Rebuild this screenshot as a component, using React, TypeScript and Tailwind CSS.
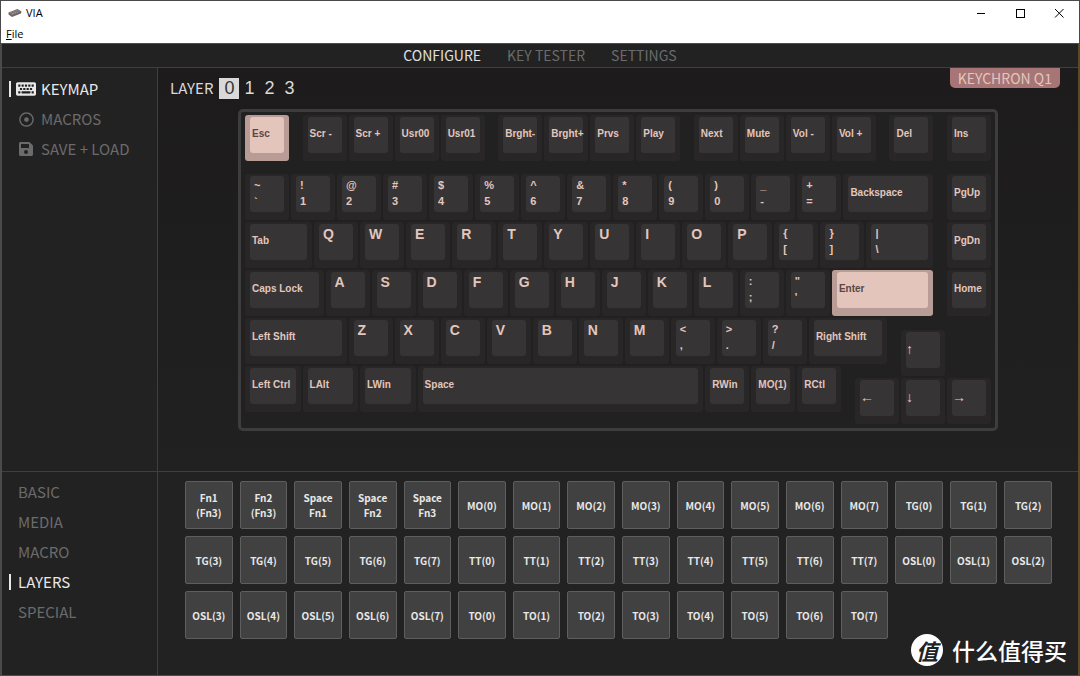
import { FaKeyboard, FaRegDotCircle, FaSave } from "react-icons/fa";
import clsx from "clsx";

type KeyDef = {
  label: string;
  // second legend, drawn under the first
  sub?: string;
  // position and width in quarter units
  x: number;
  w: number;
  accent?: boolean;
};

type KeyRow = { y: number; keys: KeyDef[] };

// Lays one-unit keys next to each other, starting at quarter unit x
const run = (x: number, labels: string[]): KeyDef[] =>
  labels.map((text, i) => {
    const [label, sub] = text.split(" ");
    return { label, sub, x: x + i * 4, w: 4 };
  });

const rows: KeyRow[] = [
  {
    y: 1,
    keys: [
      { label: "Esc", x: 0, w: 4, accent: true },
      { label: "Scr -", x: 5, w: 4 },
      { label: "Scr +", x: 9, w: 4 },
      ...run(13, ["Usr00", "Usr01"]),
      ...run(22, ["Brght-", "Brght+", "Prvs", "Play"]),
      ...run(39, ["Next", "Mute"]),
      { label: "Vol -", x: 47, w: 4 },
      { label: "Vol +", x: 51, w: 4 },
      { label: "Del", x: 56, w: 4 },
      { label: "Ins", x: 61, w: 4 },
    ],
  },
  {
    y: 6,
    keys: [
      ...run(0, ["~ `", "! 1", "@ 2", "# 3", "$ 4", "% 5", "^ 6", "& 7", "* 8", "( 9", ") 0", "_ -", "+ ="]),
      { label: "Backspace", x: 52, w: 8 },
      { label: "PgUp", x: 61, w: 4 },
    ],
  },
  {
    y: 10,
    keys: [
      { label: "Tab", x: 0, w: 6 },
      ...run(6, ["Q", "W", "E", "R", "T", "Y", "U", "I", "O", "P", "{ [", "} ]"]),
      { label: "|", sub: "\\", x: 54, w: 6 },
      { label: "PgDn", x: 61, w: 4 },
    ],
  },
  {
    y: 14,
    keys: [
      { label: "Caps Lock", x: 0, w: 7 },
      ...run(7, ["A", "S", "D", "F", "G", "H", "J", "K", "L", ": ;", "\" '"]),
      { label: "Enter", x: 51, w: 9, accent: true },
      { label: "Home", x: 61, w: 4 },
    ],
  },
  {
    y: 18,
    keys: [
      { label: "Left Shift", x: 0, w: 9 },
      ...run(9, ["Z", "X", "C", "V", "B", "N", "M", "< ,", "> .", "? /"]),
      { label: "Right Shift", x: 49, w: 7 },
    ],
  },
  { y: 19, keys: [{ label: "↑", x: 57, w: 4 }] },
  {
    y: 22,
    keys: [
      { label: "Left Ctrl", x: 0, w: 5 },
      { label: "LAlt", x: 5, w: 5 },
      { label: "LWin", x: 10, w: 5 },
      { label: "Space", x: 15, w: 25 },
      ...run(40, ["RWin", "MO(1)", "RCtl"]),
    ],
  },
  { y: 23, keys: run(53, ["←", "↓", "→"]) },
];

const range = (name: string, from: number, to: number) =>
  Array.from({ length: to - from + 1 }, (_, i) => `${name}(${from + i})`);

const keycodes = [
  "Fn1 (Fn3)",
  "Fn2 (Fn3)",
  "Space Fn1",
  "Space Fn2",
  "Space Fn3",
  ...range("MO", 0, 7),
  ...range("TG", 0, 7),
  ...range("TT", 0, 7),
  ...range("OSL", 0, 7),
  ...range("TO", 0, 7),
];

const views = [
  { label: "KEYMAP", icon: FaKeyboard, size: "size-5" },
  { label: "MACROS", icon: FaRegDotCircle, size: "size-[15px]" },
  { label: "SAVE + LOAD", icon: FaSave, size: "size-4" },
];

const categories = ["BASIC", "MEDIA", "MACRO", "LAYERS", "SPECIAL"];

function Keycap({ def, y }: { def: KeyDef; y: number }) {
  const letter = /^[A-Z]$/.test(def.label);
  const arrow = /^[←↑→↓]$/.test(def.label);

  return (
    <div
      className="pr-[2px] pb-[2px]"
      style={{ gridColumn: `${def.x + 1} / span ${def.w}`, gridRow: `${y} / span 4` }}
    >
      <button
        className={clsx(
          "block h-full w-full rounded-[3px] px-[5px] pt-[2px] pb-[8px] text-left font-['Liberation_Sans',Arial,sans-serif] font-bold whitespace-nowrap",
          def.accent ? "bg-[#b99c95] text-[#5b4545]" : "bg-[#282627] text-[#e3c6bd]",
        )}
      >
        <span
          className={clsx(
            "flex h-full flex-col rounded-[3px]",
            def.accent ? "bg-[#e4c5bb]" : "bg-[#363434]",
            letter && "pt-[2px] pl-1 text-[14px] leading-[16px]",
            def.sub && "pt-px pl-1 text-[11px] leading-[16px]",
            arrow && "justify-center pb-[2px] text-[14px] leading-[16px] font-normal",
            !letter && !def.sub && !arrow && "pt-[11px] pl-[2px] text-[10px] leading-[12px]",
          )}
        >
          <span>{def.label}</span>
          {def.sub && <span>{def.sub}</span>}
        </span>
      </button>
    </div>
  );
}

function TitleBar() {
  return (
    <header className="bg-white font-['Open_Sans','Noto_Sans',sans-serif] text-[11px] text-black">
      <div className="flex h-6 items-center pl-[7px]">
        <svg viewBox="0 0 14 10" className="h-[10px] w-[14px]">
          <path d="M0.5 4.5 L9.5 1 L13.5 3.5 L13 5.5 L4 9 L0.5 6.5 Z" fill="#6d6666" />
          <path d="M2 4.8 L9.5 2 L12 3.6 L4.4 6.7 Z" fill="#a49a98" />
          <path d="M4 4.2 L7 6 M6.5 3.2 L9.5 5 M8.6 2.4 L11.4 4.2 M3 5.6 L10.8 2.7" stroke="#6d6666" strokeWidth="0.6" />
        </svg>
        <span className="ml-1">VIA</span>
        <div className="ml-auto flex pr-px">
          <button aria-label="Minimize" className="flex h-6 w-[39px] items-center justify-center">
            <svg viewBox="0 0 10 10" className="size-[10px]" stroke="black" fill="none">
              <path d="M1 5.5H9" />
            </svg>
          </button>
          <button aria-label="Maximize" className="flex h-6 w-[39px] items-center justify-center">
            <svg viewBox="0 0 10 10" className="size-[10px]" stroke="black" fill="none">
              <rect x="1.5" y="1.5" width="8" height="8" />
            </svg>
          </button>
          <button aria-label="Close" className="flex h-6 w-[39px] items-center justify-center">
            <svg viewBox="0 0 10 10" className="size-[10px]" stroke="black" fill="none">
              <path d="M1 1L9.5 9.5M9.5 1L1 9.5" />
            </svg>
          </button>
        </div>
      </div>
      <div className="flex h-[18px] items-center pl-[5px]">
        <button className="text-[11px] leading-[14px]">
          <span className="underline">F</span>ile
        </button>
      </div>
    </header>
  );
}

export default function App() {
  return (
    <div className="flex min-h-screen flex-col border border-[#4a4a4d] bg-[#222222] font-['Noto_Sans_CJK_SC',sans-serif] text-[14px] text-[#6b6b6b]">
      <TitleBar />

      <div className="relative flex flex-1 flex-col border border-[#5a4c2a]">
        <nav className="flex h-6 items-center justify-center gap-[26px] border-b border-[#3f3f3f] pb-[2px] leading-5">
          <a href="#configure" className="text-[#e0e0e0]">CONFIGURE</a>
          <a href="#tester">KEY TESTER</a>
          <a href="#settings">SETTINGS</a>
        </nav>

        {/* Keyboard */}
        <main className="flex flex-1">
          <aside className="flex w-[156px] shrink-0 flex-col gap-[10px] border-r border-[#3f3f3f] pt-[11px] pl-[7px] text-[15px]">
            {views.map((view, i) => (
              <button
                key={view.label}
                className={clsx("flex h-5 items-center leading-5", i === 0 && "text-[#e8e8e8]")}
              >
                <span className={clsx("h-4 w-[2px]", i === 0 && "bg-[#e8e8e8]")} />
                <span className="ml-[5px] flex w-5 justify-center">
                  <view.icon className={view.size} />
                </span>
                <span className="ml-[5px]">{view.label}</span>
              </button>
            ))}
          </aside>

          <section className="relative flex-1 bg-linear-to-b from-[#1d1b1c] to-[#212121]">
            <div className="absolute top-0 right-[18px] rounded-b-[5px] bg-[#a77575] px-2 leading-5 text-[#e3c6bd]">
              KEYCHRON Q1
            </div>
            <div className="flex h-10 items-center pl-3 text-[15px] text-[#d9d9d9]">
              <span className="leading-5">LAYER</span>
              <div className="ml-[6px] flex font-['Liberation_Sans',Arial,sans-serif] text-[18px] leading-[21px]">
                {[0, 1, 2, 3].map((layer) => (
                  <button
                    key={layer}
                    className={clsx("w-5 text-center", layer === 0 && "bg-[#d9d9d9] text-[#363434]")}
                  >
                    {layer}
                  </button>
                ))}
              </div>
            </div>
            <div className="mx-auto mt-px mb-10 w-full max-w-[760px] rounded-[5px] border-3 border-[#3d3d3d] bg-[#212121] pt-[3px] pr-[2px] pb-[2px] pl-1">
              <div className="grid grid-cols-[repeat(65,minmax(0,1fr))] grid-rows-[repeat(4,12px)_11px_repeat(21,12px)]">
                {rows.map((row) =>
                  row.keys.map((def) => <Keycap key={`${row.y}-${def.x}`} def={def} y={row.y} />),
                )}
              </div>
            </div>
          </section>
        </main>

        {/* Keycode picker */}
        <section className="flex border-t border-[#3f3f3f]">
          <div className="flex w-[156px] shrink-0 flex-col gap-[10px] border-r border-[#3f3f3f] pt-[10px] pl-[7px] text-[15px]">
            {categories.map((category) => (
              <button
                key={category}
                className={clsx(
                  "flex h-5 items-center leading-5",
                  category === "LAYERS" && "text-[#e8e8e8]",
                )}
              >
                <span className={clsx("h-4 w-[2px]", category === "LAYERS" && "bg-[#e8e8e8]")} />
                <span className="ml-[7px]">{category}</span>
              </button>
            ))}
          </div>
          <div className="grid flex-1 grid-cols-16 content-start gap-[7px] pt-[9px] pr-[26px] pb-[36px] pl-[27px]">
            {keycodes.map((code) => (
              <button
                key={code}
                className="flex h-12 items-center justify-center rounded-[2px] border border-[#5e5e5e] bg-[#414141] px-[5px] text-center text-[10px] leading-[15px] font-bold text-[#e8e8e8]"
              >
                {code}
              </button>
            ))}
          </div>
        </section>

        <div className="absolute right-[11px] bottom-[9px] flex items-center gap-[9px] text-white">
          <span className="flex size-8 items-center justify-center rounded-full bg-white text-[22px] leading-8 font-bold text-[#222222] italic">
            值
          </span>
          <span className="text-[23px] leading-8 font-medium">什么值得买</span>
        </div>
      </div>
    </div>
  );
}
